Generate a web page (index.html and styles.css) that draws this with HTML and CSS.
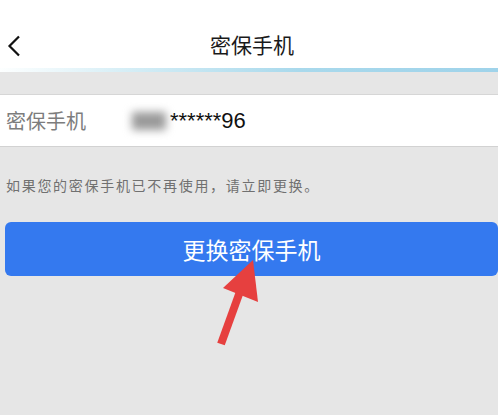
FILE: index.html
```html
<!DOCTYPE html>
<html lang="zh-CN">
<head>
    <meta charset="UTF-8">
    <meta name="viewport" content="width=device-width, initial-scale=1.0">
    <title>密保手机</title>
    <link rel="stylesheet" href="styles.css">
</head>
<body>
    <!-- Header -->
    <div class="header">
        <span class="back">
            <svg width="14" height="22" viewBox="0 0 14 22">
                <path d="M12 1.5 L2.5 11 L12 20.5" fill="none" stroke="#111" stroke-width="2.2"/>
            </svg>
        </span>
        <h1>密保手机</h1>
    </div>
    <div class="header-line"></div>

    <!-- Phone row -->
    <div class="row">
        <span class="label">密保手机</span>
        <span class="value"><span class="blur"></span>******96</span>
    </div>

    <p class="hint">如果您的密保手机已不再使用，请立即更换。</p>

    <button class="btn">更换密保手机</button>

    <!-- Arrow -->
    <svg class="arrow" width="60" height="100" viewBox="0 0 60 100">
        <line x1="11" y1="94" x2="32" y2="36" stroke="#e6403f" stroke-width="8"/>
        <polygon points="43,10 13,38 48,52" fill="#e6403f"/>
    </svg>
</body>
</html>
```

FILE: styles.css
```css
* {
    margin: 0;
    padding: 0;
    box-sizing: border-box;
}

body {
    font-family: "Noto Sans CJK SC", "Liberation Sans", sans-serif;
    background-color: #e6e6e6;
    color: #222;
    width: 498px;
    height: 415px;
    overflow: hidden;
    position: relative;
}

/* Header */
.header {
    background-color: #fff;
    height: 68px;
    display: flex;
    align-items: center;
    justify-content: center;
    position: relative;
    padding-top: 20px;
}

.header h1 {
    font-size: 21px;
    font-weight: 400;
    color: #1a1a1a;
    margin-left: 6px;
}

.header .back {
    position: absolute;
    left: 7px;
    top: 35px;
    display: flex;
}

.header-line {
    height: 4px;
    background: linear-gradient(to right, #fdffff 0%, #d6eef6 25%, #a9d9ec 60%, #9fd3ea 100%);
}

/* Row */
.row {
    margin-top: 22px;
    height: 53px;
    background-color: #fff;
    border-top: 1px solid #d6d6d6;
    border-bottom: 1px solid #d2d2d2;
    display: flex;
    align-items: center;
    padding-left: 6px;
}

.row .label {
    font-size: 20px;
    color: #7d7d7d;
    width: 126px;
}

.row .value {
    font-family: "Liberation Sans", sans-serif;
    font-size: 22px;
    color: #111;
    display: flex;
    align-items: center;
}

.row .blur {
    display: inline-block;
    width: 34px;
    height: 18px;
    background-color: #9a9a9a;
    filter: blur(4px);
    margin-right: 4px;
}

.hint {
    font-size: 14px;
    color: #707070;
    padding: 28px 0 0 6px;
    letter-spacing: 1.7px;
}

.btn {
    display: block;
    margin: 27px 0 0 5px;
    width: 493px;
    height: 54px;
    border: none;
    border-radius: 6px;
    background-color: #3479ef;
    color: #fff;
    font-family: "Noto Sans CJK SC", sans-serif;
    font-size: 23px;
}

.arrow {
    position: absolute;
    left: 210px;
    top: 250px;
}
```
